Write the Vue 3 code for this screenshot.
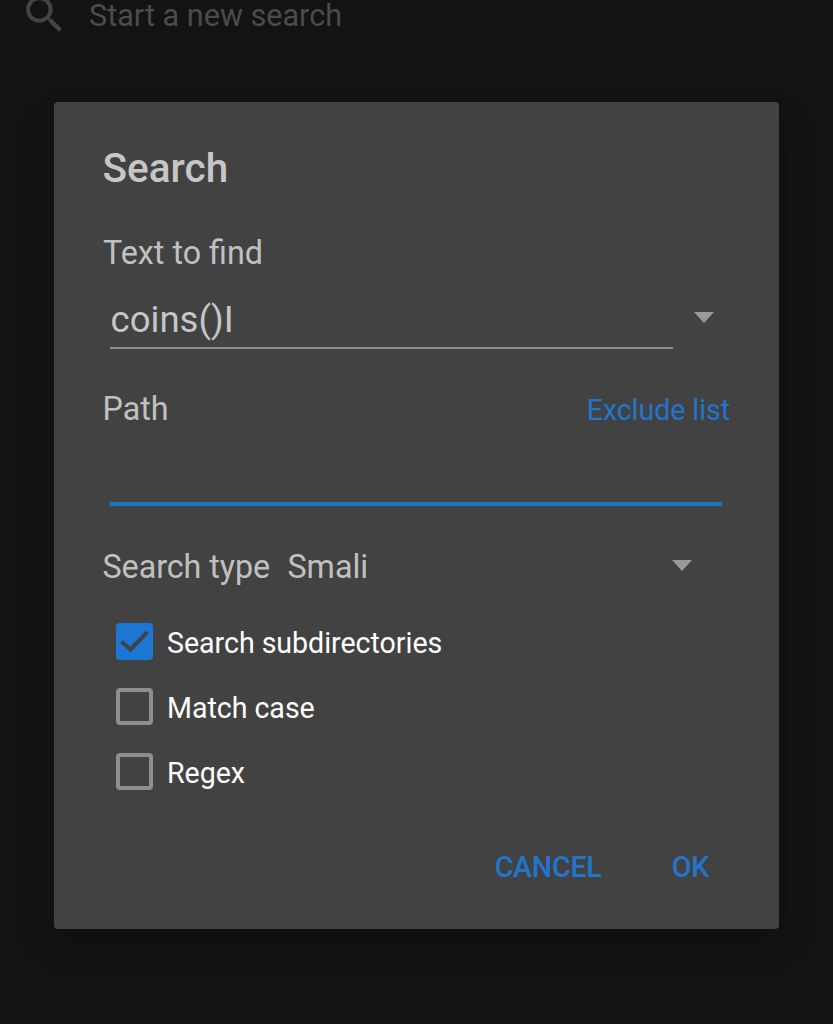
<template>
  <div class="screen">
    <header class="search-bar">
      <svg class="search-icon" viewBox="0 0 24 24">
        <path
          d="M15.5 14h-.79l-.28-.27C15.41 12.59 16 11.11 16 9.5 16 5.91 13.09 3 9.5 3S3 5.91 3 9.5 5.91 16 9.5 16c1.61 0 3.09-.59 4.23-1.57l.27.28v.79l5 4.99L20.49 19l-4.99-5zm-6 0C7.01 14 5 11.99 5 9.5S7.01 5 9.5 5 14 7.01 14 9.5 11.99 14 9.5 14z"
        />
      </svg>
      <span class="search-hint">Start a new search</span>
    </header>

    <section class="dialog" role="dialog">
      <h1 class="title">Search</h1>

      <div class="label">Text to find</div>
      <div class="find-row">
        <div class="find-input">{{ query }}</div>
        <svg class="arrow" viewBox="0 0 20 11"><path d="M0 0h20L10 11z" /></svg>
      </div>

      <div class="path-row">
        <span class="label">Path</span>
        <a class="exclude">Exclude list</a>
      </div>
      <div class="path-input"></div>

      <div class="type-row">
        <span class="label type-label">Search type</span>
        <span class="label type-value">{{ searchType }}</span>
        <svg class="arrow" viewBox="0 0 20 11"><path d="M0 0h20L10 11z" /></svg>
      </div>

      <div class="options">
        <div
          v-for="option in options"
          :key="option.label"
          class="option"
          @click="option.checked = !option.checked"
        >
          <span class="box" :class="{ checked: option.checked }">
            <svg v-if="option.checked" class="check" viewBox="0 0 37 37">
              <path d="M5.5 18.5 14.5 26.5 31.5 9" />
            </svg>
          </span>
          <span class="option-label">{{ option.label }}</span>
        </div>
      </div>

      <footer class="actions">
        <button class="action cancel">CANCEL</button>
        <button class="action ok">OK</button>
      </footer>
    </section>
  </div>
</template>

<script setup>
import { ref } from "vue";

const query = ref("coins()I");
const searchType = ref("Smali");

const options = ref([
  { label: "Search subdirectories", checked: true },
  { label: "Match case", checked: false },
  { label: "Regex", checked: false },
]);
</script>

<style>
body {
  margin: 0;
  background: #131313;
}
</style>

<style scoped>
.screen {
  display: flex;
  flex-direction: column;
  box-sizing: border-box;
  width: 833px;
  height: 1024px;
  overflow: hidden;
  background: #131313;
  font-family: Roboto, sans-serif;
}

.search-bar {
  display: flex;
  align-items: flex-start;
  flex: none;
  height: 102px;
  box-sizing: border-box;
  padding-left: 20px;
}

.search-icon {
  flex: none;
  width: 49px;
  height: 49px;
  margin-top: -10.5px;
  fill: #434343;
}

.search-hint {
  margin-left: 20px;
  font-size: 30.6px;
  line-height: 32px;
  color: #4b4b4b;
}

.dialog {
  display: flex;
  flex-direction: column;
  flex: none;
  box-sizing: border-box;
  width: 725px;
  height: 827px;
  margin-left: 54px;
  padding: 42px 49px 0;
  border-radius: 4px;
  background: #424242;
  box-shadow: 0 16px 36px rgba(0, 0, 0, 0.2);
}

.title {
  margin: 0 0 41px -0.5px;
  padding-top: 1px;
  font-size: 40.5px;
  line-height: 47px;
  font-weight: 500;
  color: #c6c6c6;
}

.label {
  font-size: 32.3px;
  line-height: 40px;
  color: #c0c0c0;
}

.find-row {
  display: flex;
  align-items: center;
  height: 76px;
}

.find-input {
  box-sizing: border-box;
  width: 563px;
  height: 76px;
  margin: 0 21px 0 7px;
  padding: 23px 0 0 0.5px;
  border-bottom: 2px solid #8e8e8e;
  font-size: 36.6px;
  line-height: 48px;
  color: #c6c6c6;
}

.arrow {
  flex: none;
  width: 20px;
  height: 11px;
  fill: #9a9a9a;
}

.find-row .arrow {
  margin-top: 13px;
}

.path-row {
  display: flex;
  justify-content: space-between;
  align-items: center;
  height: 40px;
  margin-top: 39px;
}

.path-row .label {
  margin-left: -0.5px;
  padding-top: 1px;
}

.exclude {
  margin-top: 3px;
  font-size: 28.6px;
  line-height: 36px;
  letter-spacing: -0.08px;
  color: #2175cc;
}

.path-input {
  box-sizing: border-box;
  width: 612px;
  height: 78px;
  margin-left: 7px;
  border-bottom: 4px solid #2175c6;
}

.type-row {
  display: flex;
  align-items: center;
  height: 40px;
  margin-top: 40px;
}

.type-row .label {
  padding-top: 1px;
  letter-spacing: -0.06px;
}

.type-label {
  width: 185px;
  margin-left: -0.5px;
}

.type-value {
  width: 384.5px;
}

.type-row .arrow {
  margin-top: -1px;
}

.options {
  margin: 23px 0 0 13px;
}

.option {
  display: flex;
  align-items: center;
  height: 65px;
}

.box {
  flex: none;
  box-sizing: border-box;
  width: 37px;
  height: 37px;
  border: 4px solid #8e8e8e;
  border-radius: 4px;
}

.box.checked {
  border: 0;
  background: #1c76d4;
}

.check {
  display: block;
  width: 37px;
  height: 37px;
  fill: none;
  stroke: #424242;
  stroke-width: 4;
}

.option-label {
  margin: 2px 0 0 14px;
  font-size: 28.6px;
  line-height: 36px;
  letter-spacing: -0.04px;
  color: #fff;
}

.actions {
  display: flex;
  justify-content: flex-end;
  gap: 70px;
  margin-top: 44px;
  padding-right: 21px;
}

.action {
  padding: 0;
  border: 0;
  background: none;
  font-family: inherit;
  font-size: 28.6px;
  line-height: 38px;
  font-weight: 500;
  letter-spacing: -0.2px;
  color: #2175cc;
}
</style>
